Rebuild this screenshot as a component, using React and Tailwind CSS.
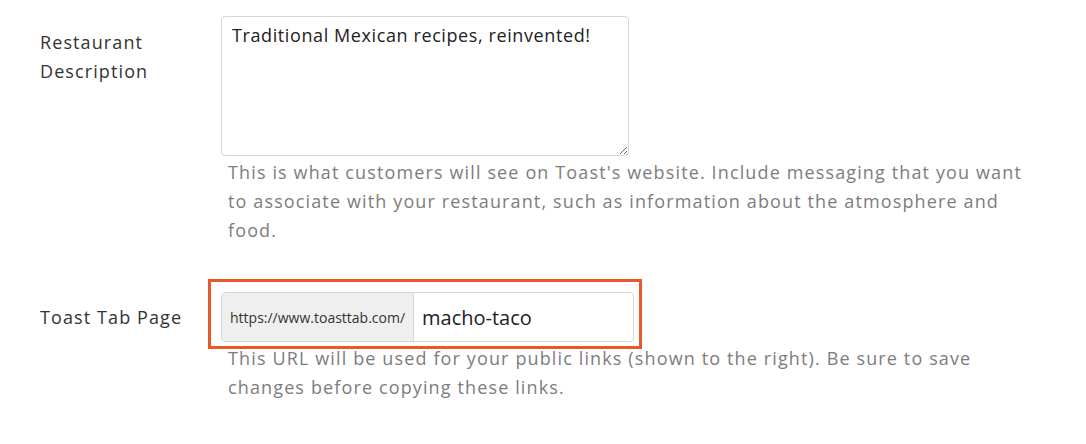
import React from 'react';

export default function App() {
  return (
    <div className="w-[1086px] h-[444px] bg-white pt-4 pl-10 text-[18px] leading-[29px]" style={{ fontFamily: '"Open Sans", Arial, sans-serif' }}>
      {/* Restaurant Description */}
      <div className="flex">
        <label className="w-[181px] shrink-0 pt-3 text-[#333] tracking-[1.1px]">
          Restaurant
          <br />
          Description
        </label>
        <div className="flex flex-col">
          <textarea
            className="w-[408px] h-[140px] border border-[#d6d6d6] rounded-[4px] px-[10px] py-[4px] text-[#222] tracking-[0.6px] outline-none"
            defaultValue="Traditional Mexican recipes, reinvented!"
          />
          <p className="mt-[2px] pl-[7px] w-[807px] text-[#7d7d7d] tracking-[1.13px]">
            This is what customers will see on Toast's website. Include messaging that you want to associate with your restaurant, such as information about the atmosphere and food.
          </p>
        </div>
      </div>

      {/* Toast Tab Page */}
      <div className="flex mt-[47px]">
        <label className="w-[181px] shrink-0 pt-[11px] text-[#333] tracking-[1.1px]">Toast Tab Page</label>
        <div className="flex flex-col">
          <div className="relative">
            <div className="flex w-[413px] h-[50px] border border-[#d6d6d6] rounded-[4px] overflow-hidden">
              <span className="flex shrink-0 items-center px-[8px] w-[192px] bg-[#efefef] border-r border-[#d6d6d6] text-[14px] text-[#333]">
                https://www.toasttab.com/
              </span>
              <input
                className="min-w-0 flex-1 px-[8px] text-[20px] text-[#222] outline-none"
                defaultValue="macho-taco"
              />
            </div>
            {/* annotation box */}
            <div className="absolute left-[-13px] top-[-13px] w-[434px] h-[70px] border-[3px] border-[#e8582a] pointer-events-none" />
          </div>
          <p className="mt-[2px] pl-[7px] w-[807px] text-[#7d7d7d] tracking-[1.13px]">
            This URL will be used for your public links (shown to the right). Be sure to save changes before copying these links.
          </p>
        </div>
      </div>
    </div>
  );
}
